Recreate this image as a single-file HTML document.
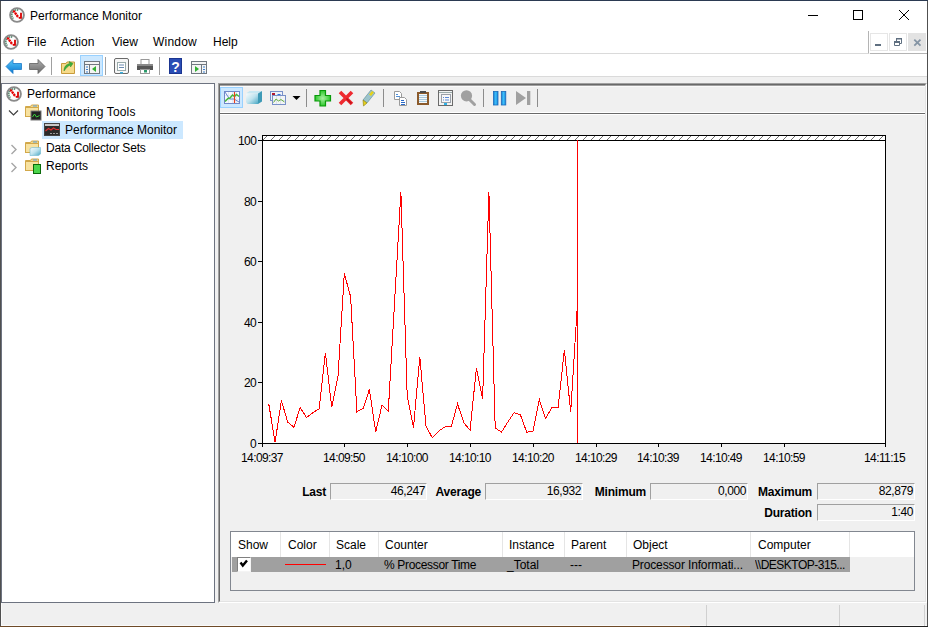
<!DOCTYPE html>
<html><head><meta charset="utf-8">
<style>
*{margin:0;padding:0;box-sizing:border-box}
html,body{width:928px;height:627px;overflow:hidden;background:#f0f0f0;font-family:"Liberation Sans",sans-serif;font-size:12px;color:#000}
.a{position:absolute}
.t{position:absolute;white-space:nowrap;line-height:14px}
.ax{position:absolute;white-space:nowrap;line-height:14px;letter-spacing:-0.6px;color:#000}
.box{position:absolute;height:17px;border-top:1px solid #a0a0a0;border-left:1px solid #a0a0a0;border-right:1px solid #fff;border-bottom:1px solid #fff;background:#f0f0f0;text-align:right;padding-right:1px;line-height:15px;letter-spacing:-0.4px}
.lb{text-align:right;font-weight:bold;letter-spacing:-0.2px}
.rw{letter-spacing:-0.2px}
.sep{position:absolute;width:1px;background:#e5e5e5}
</style></head><body>
<!-- window frame -->
<div class="a" style="left:0;top:0;width:928px;height:1px;background:#2b3a52"></div>
<div class="a" style="left:0;top:1px;width:1px;height:626px;background:#505050"></div>
<div class="a" style="left:927px;top:1px;width:1px;height:626px;background:#505050"></div>
<div class="a" style="left:0;top:626px;width:690px;height:1px;background:#6e4a28"></div>
<div class="a" style="left:690px;top:626px;width:238px;height:1px;background:#202020"></div>
<div class="a" style="left:1px;top:625px;width:926px;height:1px;background:#fafafa"></div>
<div class="a" style="left:1px;top:603px;width:1px;height:22px;background:#fafafa"></div>
<!-- title bar -->
<div class="a" style="left:1px;top:1px;width:926px;height:52px;background:#fff"></div>
<div class="t" style="left:30px;top:9px">Performance Monitor</div>
<!-- menu -->
<div class="t" style="left:27px;top:35px">File</div>
<div class="t" style="left:61px;top:35px">Action</div>
<div class="t" style="left:112px;top:35px">View</div>
<div class="t" style="left:153px;top:35px;letter-spacing:0.2px">Window</div>
<div class="t" style="left:213px;top:35px">Help</div>
<div class="a" style="left:1px;top:53px;width:867px;height:1px;background:#dadada"></div>
<!-- toolbar -->
<div class="a" style="left:1px;top:54px;width:926px;height:22px;background:#fff"></div>
<div class="a" style="left:1px;top:76px;width:926px;height:1px;background:#dadada"></div>
<!-- left pane -->
<div class="a" style="left:1px;top:83px;width:214px;height:520px;background:#fff;border:1px solid #6d7380"></div>
<div class="t" style="left:27px;top:87px">Performance</div>
<div class="t" style="left:46px;top:105px;letter-spacing:0.15px">Monitoring Tools</div>
<div class="a" style="left:42px;top:121px;width:141px;height:18px;background:#cce8ff"></div>
<div class="t" style="left:65px;top:123px">Performance Monitor</div>
<div class="t" style="left:46px;top:141px;letter-spacing:-0.2px">Data Collector Sets</div>
<div class="t" style="left:46px;top:159px">Reports</div>
<!-- right pane -->
<div class="a" style="left:218px;top:83px;width:709px;height:520px;border-left:1px solid #a0a0a0;border-top:1px solid #a0a0a0;border-right:1px solid #fff;border-bottom:1px solid #fff;background:#f0f0f0"></div>
<div class="a" style="left:219px;top:84px;width:707px;height:518px;border-left:1px solid #696969;border-top:1px solid #696969;border-right:1px solid #e3e3e3;border-bottom:1px solid #e3e3e3;background:#f0f0f0"></div>
<div class="a" style="left:220px;top:85px;width:705px;height:1px;background:#a0a0a0"></div>
<div class="a" style="left:220px;top:86px;width:705px;height:1px;background:#fafafa"></div>
<div class="a" style="left:220px;top:87px;width:23px;height:21px;background:#cce8ff;border:1px solid #99d1ff"></div>
<div class="a" style="left:220px;top:112px;width:705px;height:3px;border-top:1px solid #fff;border-bottom:1px solid #fff;background:#696969"></div>
<!-- axis labels -->
<div class="ax" style="left:238px;top:134px">100</div>
<div class="ax" style="left:244px;top:195px">80</div>
<div class="ax" style="left:244px;top:255px">60</div>
<div class="ax" style="left:244px;top:316px">40</div>
<div class="ax" style="left:244px;top:376px">20</div>
<div class="ax" style="left:250px;top:437px">0</div>
<div class="ax" style="left:241px;top:451px">14:09:37</div>
<div class="ax" style="left:323px;top:451px">14:09:50</div>
<div class="ax" style="left:386px;top:451px">14:10:00</div>
<div class="ax" style="left:449px;top:451px">14:10:10</div>
<div class="ax" style="left:512px;top:451px">14:10:20</div>
<div class="ax" style="left:575px;top:451px">14:10:29</div>
<div class="ax" style="left:637px;top:451px">14:10:39</div>
<div class="ax" style="left:700px;top:451px">14:10:49</div>
<div class="ax" style="left:763px;top:451px">14:10:59</div>
<div class="ax" style="left:864px;top:451px">14:11:15</div>
<svg class="a" style="left:0;top:0" width="928" height="627" viewBox="0 0 928 627">
<rect x="262.5" y="135.5" width="623" height="308" fill="#fff" stroke="#000" stroke-width="1"/>
<path d="M263 139h1v1h-1zM264 138h1v1h-1zM265 137h1v1h-1zM266 136h1v1h-1zM271 139h1v1h-1zM272 138h1v1h-1zM273 137h1v1h-1zM274 136h1v1h-1zM279 139h1v1h-1zM280 138h1v1h-1zM281 137h1v1h-1zM282 136h1v1h-1zM287 139h1v1h-1zM288 138h1v1h-1zM289 137h1v1h-1zM290 136h1v1h-1zM295 139h1v1h-1zM296 138h1v1h-1zM297 137h1v1h-1zM298 136h1v1h-1zM303 139h1v1h-1zM304 138h1v1h-1zM305 137h1v1h-1zM306 136h1v1h-1zM311 139h1v1h-1zM312 138h1v1h-1zM313 137h1v1h-1zM314 136h1v1h-1zM319 139h1v1h-1zM320 138h1v1h-1zM321 137h1v1h-1zM322 136h1v1h-1zM327 139h1v1h-1zM328 138h1v1h-1zM329 137h1v1h-1zM330 136h1v1h-1zM335 139h1v1h-1zM336 138h1v1h-1zM337 137h1v1h-1zM338 136h1v1h-1zM343 139h1v1h-1zM344 138h1v1h-1zM345 137h1v1h-1zM346 136h1v1h-1zM351 139h1v1h-1zM352 138h1v1h-1zM353 137h1v1h-1zM354 136h1v1h-1zM359 139h1v1h-1zM360 138h1v1h-1zM361 137h1v1h-1zM362 136h1v1h-1zM367 139h1v1h-1zM368 138h1v1h-1zM369 137h1v1h-1zM370 136h1v1h-1zM375 139h1v1h-1zM376 138h1v1h-1zM377 137h1v1h-1zM378 136h1v1h-1zM383 139h1v1h-1zM384 138h1v1h-1zM385 137h1v1h-1zM386 136h1v1h-1zM391 139h1v1h-1zM392 138h1v1h-1zM393 137h1v1h-1zM394 136h1v1h-1zM399 139h1v1h-1zM400 138h1v1h-1zM401 137h1v1h-1zM402 136h1v1h-1zM407 139h1v1h-1zM408 138h1v1h-1zM409 137h1v1h-1zM410 136h1v1h-1zM415 139h1v1h-1zM416 138h1v1h-1zM417 137h1v1h-1zM418 136h1v1h-1zM423 139h1v1h-1zM424 138h1v1h-1zM425 137h1v1h-1zM426 136h1v1h-1zM431 139h1v1h-1zM432 138h1v1h-1zM433 137h1v1h-1zM434 136h1v1h-1zM439 139h1v1h-1zM440 138h1v1h-1zM441 137h1v1h-1zM442 136h1v1h-1zM447 139h1v1h-1zM448 138h1v1h-1zM449 137h1v1h-1zM450 136h1v1h-1zM455 139h1v1h-1zM456 138h1v1h-1zM457 137h1v1h-1zM458 136h1v1h-1zM463 139h1v1h-1zM464 138h1v1h-1zM465 137h1v1h-1zM466 136h1v1h-1zM471 139h1v1h-1zM472 138h1v1h-1zM473 137h1v1h-1zM474 136h1v1h-1zM479 139h1v1h-1zM480 138h1v1h-1zM481 137h1v1h-1zM482 136h1v1h-1zM487 139h1v1h-1zM488 138h1v1h-1zM489 137h1v1h-1zM490 136h1v1h-1zM495 139h1v1h-1zM496 138h1v1h-1zM497 137h1v1h-1zM498 136h1v1h-1zM503 139h1v1h-1zM504 138h1v1h-1zM505 137h1v1h-1zM506 136h1v1h-1zM511 139h1v1h-1zM512 138h1v1h-1zM513 137h1v1h-1zM514 136h1v1h-1zM519 139h1v1h-1zM520 138h1v1h-1zM521 137h1v1h-1zM522 136h1v1h-1zM527 139h1v1h-1zM528 138h1v1h-1zM529 137h1v1h-1zM530 136h1v1h-1zM535 139h1v1h-1zM536 138h1v1h-1zM537 137h1v1h-1zM538 136h1v1h-1zM543 139h1v1h-1zM544 138h1v1h-1zM545 137h1v1h-1zM546 136h1v1h-1zM551 139h1v1h-1zM552 138h1v1h-1zM553 137h1v1h-1zM554 136h1v1h-1zM559 139h1v1h-1zM560 138h1v1h-1zM561 137h1v1h-1zM562 136h1v1h-1zM567 139h1v1h-1zM568 138h1v1h-1zM569 137h1v1h-1zM570 136h1v1h-1zM575 139h1v1h-1zM576 138h1v1h-1zM577 137h1v1h-1zM578 136h1v1h-1zM583 139h1v1h-1zM584 138h1v1h-1zM585 137h1v1h-1zM586 136h1v1h-1zM591 139h1v1h-1zM592 138h1v1h-1zM593 137h1v1h-1zM594 136h1v1h-1zM599 139h1v1h-1zM600 138h1v1h-1zM601 137h1v1h-1zM602 136h1v1h-1zM607 139h1v1h-1zM608 138h1v1h-1zM609 137h1v1h-1zM610 136h1v1h-1zM615 139h1v1h-1zM616 138h1v1h-1zM617 137h1v1h-1zM618 136h1v1h-1zM623 139h1v1h-1zM624 138h1v1h-1zM625 137h1v1h-1zM626 136h1v1h-1zM631 139h1v1h-1zM632 138h1v1h-1zM633 137h1v1h-1zM634 136h1v1h-1zM639 139h1v1h-1zM640 138h1v1h-1zM641 137h1v1h-1zM642 136h1v1h-1zM647 139h1v1h-1zM648 138h1v1h-1zM649 137h1v1h-1zM650 136h1v1h-1zM655 139h1v1h-1zM656 138h1v1h-1zM657 137h1v1h-1zM658 136h1v1h-1zM663 139h1v1h-1zM664 138h1v1h-1zM665 137h1v1h-1zM666 136h1v1h-1zM671 139h1v1h-1zM672 138h1v1h-1zM673 137h1v1h-1zM674 136h1v1h-1zM679 139h1v1h-1zM680 138h1v1h-1zM681 137h1v1h-1zM682 136h1v1h-1zM687 139h1v1h-1zM688 138h1v1h-1zM689 137h1v1h-1zM690 136h1v1h-1zM695 139h1v1h-1zM696 138h1v1h-1zM697 137h1v1h-1zM698 136h1v1h-1zM703 139h1v1h-1zM704 138h1v1h-1zM705 137h1v1h-1zM706 136h1v1h-1zM711 139h1v1h-1zM712 138h1v1h-1zM713 137h1v1h-1zM714 136h1v1h-1zM719 139h1v1h-1zM720 138h1v1h-1zM721 137h1v1h-1zM722 136h1v1h-1zM727 139h1v1h-1zM728 138h1v1h-1zM729 137h1v1h-1zM730 136h1v1h-1zM735 139h1v1h-1zM736 138h1v1h-1zM737 137h1v1h-1zM738 136h1v1h-1zM743 139h1v1h-1zM744 138h1v1h-1zM745 137h1v1h-1zM746 136h1v1h-1zM751 139h1v1h-1zM752 138h1v1h-1zM753 137h1v1h-1zM754 136h1v1h-1zM759 139h1v1h-1zM760 138h1v1h-1zM761 137h1v1h-1zM762 136h1v1h-1zM767 139h1v1h-1zM768 138h1v1h-1zM769 137h1v1h-1zM770 136h1v1h-1zM775 139h1v1h-1zM776 138h1v1h-1zM777 137h1v1h-1zM778 136h1v1h-1zM783 139h1v1h-1zM784 138h1v1h-1zM785 137h1v1h-1zM786 136h1v1h-1zM791 139h1v1h-1zM792 138h1v1h-1zM793 137h1v1h-1zM794 136h1v1h-1zM799 139h1v1h-1zM800 138h1v1h-1zM801 137h1v1h-1zM802 136h1v1h-1zM807 139h1v1h-1zM808 138h1v1h-1zM809 137h1v1h-1zM810 136h1v1h-1zM815 139h1v1h-1zM816 138h1v1h-1zM817 137h1v1h-1zM818 136h1v1h-1zM823 139h1v1h-1zM824 138h1v1h-1zM825 137h1v1h-1zM826 136h1v1h-1zM831 139h1v1h-1zM832 138h1v1h-1zM833 137h1v1h-1zM834 136h1v1h-1zM839 139h1v1h-1zM840 138h1v1h-1zM841 137h1v1h-1zM842 136h1v1h-1zM847 139h1v1h-1zM848 138h1v1h-1zM849 137h1v1h-1zM850 136h1v1h-1zM855 139h1v1h-1zM856 138h1v1h-1zM857 137h1v1h-1zM858 136h1v1h-1zM863 139h1v1h-1zM864 138h1v1h-1zM865 137h1v1h-1zM866 136h1v1h-1zM871 139h1v1h-1zM872 138h1v1h-1zM873 137h1v1h-1zM874 136h1v1h-1zM879 139h1v1h-1zM880 138h1v1h-1zM881 137h1v1h-1zM882 136h1v1h-1z" fill="#707070" shape-rendering="crispEdges"/>
<line x1="262" y1="140.5" x2="886" y2="140.5" stroke="#000"/>
<path d="M258 140.5H262M258 201.5H262M258 261.5H262M258 322.5H262M258 382.5H262M258 443.5H262" stroke="#000"/>
<path d="M262.5 443V447M344.5 443V447M407.5 443V447M470.5 443V447M533.5 443V447M596.5 443V447M658.5 443V447M721.5 443V447M784.5 443V447M885.5 443V447" stroke="#000"/>
<polyline points="268.8,404.2 275.1,442.1 281.4,400.6 287.7,422.1 293.9,427.2 300.2,407.5 306.5,417.5 312.8,412.7 319.1,408.8 325.4,352.7 331.7,407.2 338.0,376.3 344.3,273.6 350.6,296.7 356.9,411.8 363.1,408.5 369.4,389.4 375.7,432.1 382.0,405.1 388.3,410.9 394.6,301.5 400.9,192.1 407.2,395.7 413.5,427.5 419.8,356.9 426.0,426.3 432.3,437.8 438.6,431.2 444.9,426.9 451.2,426.9 457.5,403.9 463.8,422.7 470.1,430.3 476.4,367.9 482.6,399.1 488.9,191.8 495.2,427.9 501.5,432.1 507.8,422.1 514.1,412.7 520.4,414.8 526.7,432.1 533.0,431.5 539.3,399.4 545.5,418.5 551.8,407.9 558.1,407.9 564.4,349.7 570.7,412.1 577.0,310.6" fill="none" stroke="#f00" stroke-width="1" shape-rendering="crispEdges"/>
<line x1="577.5" y1="140" x2="577.5" y2="443" stroke="#f00"/>
</svg>
<svg class="a" style="left:0;top:0" width="928" height="627" viewBox="0 0 928 627">
<defs>
<g id="gauge">
<circle cx="8" cy="8" r="6.9" fill="#fcfcfc" stroke="#8a8a8a" stroke-width="1.9"/>
<path d="M4.4 11.6A5 5 0 0 1 9.5 3.2" fill="none" stroke="#5c8c74" stroke-width="1.7" stroke-dasharray="1.3 0.7"/>
<path d="M4.4 3.6L9.4 10.4" stroke="#e60000" stroke-width="2.3" stroke-dasharray="2.2 0.5"/>
<path d="M12 5.8V10.8H9.8" fill="none" stroke="#d80000" stroke-width="1.8"/>
</g>
<g id="folder">
<path d="M0.5 2.5H5.5L6.5 1H13.5V12.5H0.5Z" fill="#f5d889" stroke="#d2a84a" stroke-width="1"/>
<rect x="0.5" y="3.5" width="13" height="9" fill="#f8e2a0" stroke="#d2a84a" stroke-width="1"/>
<rect x="8" y="1.5" width="4" height="1" fill="#5aa0e0"/>
</g>
<linearGradient id="blueg" x1="0" y1="0" x2="0" y2="1"><stop offset="0" stop-color="#5ac8fa"/><stop offset="1" stop-color="#0a78d0"/></linearGradient>
<linearGradient id="grayg" x1="0" y1="0" x2="0" y2="1"><stop offset="0" stop-color="#b0b0b0"/><stop offset="1" stop-color="#6a6a6a"/></linearGradient>
<linearGradient id="cubeg" x1="0" y1="0" x2="1" y2="1"><stop offset="0" stop-color="#f6fbfd"/><stop offset="0.5" stop-color="#bfe3ee"/><stop offset="1" stop-color="#4aa8c4"/></linearGradient>
<linearGradient id="pauseg" x1="0" y1="0" x2="1" y2="0"><stop offset="0" stop-color="#1a7fd8"/><stop offset="0.5" stop-color="#3cc0f8"/><stop offset="1" stop-color="#1a7fd8"/></linearGradient>
<radialGradient id="plusg" cx="0.5" cy="0.5" r="0.5"><stop offset="0" stop-color="#a8f0a0"/><stop offset="1" stop-color="#2cc82c"/></radialGradient>
</defs>
<!-- title icon + menu icon -->
<use href="#gauge" x="9" y="7"/>
<use href="#gauge" x="3" y="34"/>
<!-- window controls -->
<path d="M808 15.5H818" stroke="#000" stroke-width="1"/>
<rect x="853.5" y="10.5" width="9" height="9" fill="none" stroke="#000" stroke-width="1"/>
<path d="M899 10L909 20M909 10L899 20" stroke="#000" stroke-width="1"/>
<!-- mdi buttons -->
<path d="M868.5 31V53.5" stroke="#b4b4b4"/>
<path d="M870 53.5H927" stroke="#b4b4b4"/>
<rect x="870.5" y="33.5" width="17" height="17" fill="#fff" stroke="#e6e6e6"/>
<rect x="889.5" y="33.5" width="17" height="17" fill="#fff" stroke="#e6e6e6"/>
<rect x="908" y="33" width="18" height="18" fill="#e3e3e3"/>
<rect x="875" y="44" width="6" height="2" fill="#5f6f80"/>
<path d="M896.5 41V38.5H901.5V43.5H899.5" fill="none" stroke="#5f6f80" stroke-width="1"/><rect x="894" y="41" width="6" height="2" fill="#5f6f80"/><path d="M894.5 42V45.5H899.5V42" fill="none" stroke="#5f6f80" stroke-width="1"/><rect x="896" y="38" width="6" height="1.5" fill="#5f6f80"/>
<path d="M914.3 39.6L920.5 45.6M920.5 39.6L914.3 45.6" stroke="#8494a4" stroke-width="1.8"/>
<!-- main toolbar -->
<path d="M6 66.5L13 59.5V63.5H21.5V69.5H13V73.5Z" fill="url(#blueg)" stroke="#1a78c8" stroke-width="0.8"/>
<path d="M45 66.5L38 59.5V63.5H29.5V69.5H38V73.5Z" fill="url(#grayg)" stroke="#606060" stroke-width="0.8"/>
<path d="M51.5 57V75M105.5 57V75M159.5 57V75" stroke="#a0a0a0"/>
<path d="M61.5 63.5H66L67 62H74.5V73.5H61.5Z" fill="#f6da8a" stroke="#c89b3c"/>
<path d="M64 71C64 66 67 64 70 63.5L69 61.5L73 63.5L70.5 67L70.2 65C68 66 66 68 64 71Z" fill="#3cb03c" stroke="#2a8a2a" stroke-width="0.5"/>
<rect x="80.5" y="55.5" width="22" height="20" fill="#cce8ff" stroke="#99d1ff"/>
<rect x="84.5" y="61.5" width="15" height="12" fill="#f4f4f4" stroke="#707880"/>
<path d="M85 64.5H99" stroke="#707880"/>
<path d="M89.5 64.5V73.5" stroke="#707880"/>
<path d="M86 67H88M86 69.5H88M86 72H88" stroke="#3a80d0"/>
<path d="M96 66L92 69L96 72Z" fill="#30b030"/>
<rect x="114.5" y="58.5" width="14" height="15" rx="1.5" fill="#f6f6f6" stroke="#6a6a6a"/>
<rect x="117.5" y="62.5" width="8" height="8" fill="#fff" stroke="#9aa"/>
<path d="M119 65H124M119 67.5H124" stroke="#6a8ab0"/>
<rect x="120" y="72" width="3" height="1.5" fill="#3ab0e0"/>
<rect x="141" y="59.5" width="8" height="5" fill="#fff" stroke="#999"/>
<rect x="137" y="64" width="16" height="6" fill="#555"/>
<rect x="137" y="64" width="16" height="2" fill="#888"/>
<rect x="140.5" y="69.5" width="9" height="4" fill="#fff" stroke="#999"/>
<rect x="144" y="70" width="3" height="2.5" fill="#2a9a6a"/>
<rect x="169" y="58" width="13" height="16" fill="#2a4db5"/>
<rect x="169.5" y="58.5" width="12" height="15" fill="none" stroke="#1b3590"/>
<text x="175.5" y="71.5" font-family="Liberation Sans" font-size="14" font-weight="bold" fill="#fff" text-anchor="middle">?</text>
<rect x="191.5" y="61.5" width="15" height="12" fill="#f4f4f4" stroke="#707880"/>
<path d="M192 64.5H206" stroke="#707880"/>
<path d="M201.5 64.5V73.5" stroke="#707880"/>
<path d="M203 67H205M203 69.5H205M203 72H205" stroke="#3a80d0"/>
<path d="M195 66V72L199 69Z" fill="#30b030"/>
<!-- tree icons -->
<use href="#gauge" x="6" y="86"/>
<path d="M9 110.5L13.5 115L18 110.5" fill="none" stroke="#404040" stroke-width="1.2"/>
<use href="#folder" x="25" y="104"/>
<rect x="31" y="111" width="10" height="9" fill="#222" stroke="#777" stroke-width="1"/>
<path d="M32.5 117L34.5 114L36.5 117L39.5 115.5" fill="none" stroke="#3ad23a" stroke-width="1"/>
<rect x="44.5" y="123.5" width="15" height="12" fill="#2b2b2b" stroke="#444"/>
<rect x="45" y="124" width="14" height="2" fill="#c8c8c8"/>
<path d="M45.5 131L48.5 128.5L51 130L53.5 128L56 129.5H59" fill="none" stroke="#e03030" stroke-width="1.2"/>
<path d="M50 133.5H52M53 133.5H55M56 133.5H58" stroke="#999"/>
<path d="M11.5 145L16 149.5L11.5 154" fill="none" stroke="#a6a6a6" stroke-width="1.4"/>
<use href="#folder" x="25" y="140"/>
<path d="M30 148.5L32 147.5H40.5V154L38.5 155.5H30Z" fill="url(#cubeg)" stroke="#70b8d0" stroke-width="0.6"/>
<path d="M11.5 163L16 167.5L11.5 172" fill="none" stroke="#a6a6a6" stroke-width="1.4"/>
<use href="#folder" x="25" y="158"/>
<rect x="33.5" y="164.5" width="7" height="9" fill="#4cd64c" stroke="#0a6a0a"/>
<!-- right toolbar -->
<rect x="224.5" y="91.5" width="15" height="12" fill="#f6f9ff" stroke="#7088c8"/>
<path d="M228.5 92V103M232.5 92V103M236.5 92V103M225 95.5H239M225 99.5H239" stroke="#e2e9f6"/>
<path d="M225 92L229.5 99H234L239 102" fill="none" stroke="#6a86d0" stroke-width="1"/>
<path d="M225 101.5L228 98.5L230 98L232.5 95L234.5 96.5L236.5 94.5L239 96.5" fill="none" stroke="#46b83c" stroke-width="1.5"/>
<path d="M234.5 92V103" stroke="#e8401c" stroke-width="1.2"/>
<path d="M246 93.5L249.5 91H262L258 93.5Z" fill="#c8e8f2"/>
<path d="M246 93.5H258V104H247.5L246 102Z" fill="url(#cubeg)"/>
<path d="M258 93.5L262 91V101.5L258 104Z" fill="#3e9ab6"/>
<rect x="270.5" y="91.5" width="12" height="9" fill="#eef1f8" stroke="#7890c8"/>
<rect x="272" y="93" width="3" height="2" fill="#b01830"/>
<rect x="277.5" y="94" width="3" height="1.5" fill="#3070e0"/>
<rect x="272.5" y="95.5" width="13" height="9" fill="#f2f4f6" stroke="#7890c8"/>
<path d="M276.5 96V104M280.5 96V104M273 100.5H285" stroke="#dde3ea"/>
<path d="M273.5 102.5L276 99L278.5 101L281 99.5L284.5 102" fill="none" stroke="#66b040" stroke-width="1"/>
<path d="M292.5 96H300.5L296.5 100Z" fill="#000"/>
<path d="M306.5 89V107M383.5 89V107M483.5 89V107M537.5 89V107" stroke="#8c8c8c"/>
<path d="M320 90.5H325.5V95.5H330.5V101H325.5V106H320V101H315V95.5H320Z" fill="url(#plusg)" stroke="#0a9a0a" stroke-width="1.2"/>
<path d="M340 92L346 98L352 92M340 104L346 98L352 104" fill="none" stroke="#ee2a30" stroke-width="3.6"/><path d="M346.5 98.5L351.5 103.5" stroke="#c01018" stroke-width="1.6"/>
<path d="M371 90L375 93L367 103L363 100Z" fill="#9cc4cc" stroke="#5a8a94" stroke-width="0.6"/>
<path d="M372 91L374 92.5L371 96L369 94.5Z" fill="#e6d21a"/>
<path d="M363 100L367 103L363.5 106Z" fill="#e6d21a" stroke="#8a7a10" stroke-width="0.6"/>
<path d="M394.5 91.5H399.5L401.5 93.5V99.5H394.5Z" fill="#fff" stroke="#9a9a9a"/>
<path d="M396 94.5H398M396 96.5H400" stroke="#5090d8"/>
<path d="M399.5 97.5H404.5L406.5 99.5V105.5H399.5Z" fill="#fff" stroke="#9a9a9a"/>
<path d="M401 100.5H404M401 102.5H405M401 104.5H405" stroke="#2a6ac8"/>
<rect x="417" y="92" width="12" height="13" fill="#8b5a2b"/>
<rect x="419" y="94" width="8" height="9" fill="#f4f8fa"/>
<path d="M419 95.5H427M419 97.5H427M419 99.5H427M419 101.5H427" stroke="#a8c8dc"/>
<rect x="420" y="91" width="6" height="2" fill="#4a4a4a"/>
<rect x="438.5" y="90.5" width="14" height="15" fill="#f2f2f2" stroke="#6a6a6a"/>
<path d="M439 92.5H452" stroke="#9aa"/>
<rect x="441.5" y="94.5" width="9" height="8" fill="#f8f8f8" stroke="#9aa0a8"/>
<path d="M443 97.5H444M445 97.5H449M443 100H444M445 100H449" stroke="#5a8ad8"/>
<rect x="444" y="103" width="3" height="2" fill="#2ab0e8"/>
<circle cx="466.5" cy="95.8" r="5.6" fill="#a0a0a0"/>
<path d="M469.5 99.5L474.5 104.5" stroke="#a0a0a0" stroke-width="3" stroke-linecap="round"/>
<rect x="493.5" y="91.5" width="4.5" height="13.5" fill="url(#pauseg)" stroke="#1a6ab8" stroke-width="0.8"/>
<rect x="501.3" y="91.5" width="4.5" height="13.5" fill="url(#pauseg)" stroke="#1a6ab8" stroke-width="0.8"/>
<path d="M516 91V105L526 98Z" fill="#a0a0a0"/>
<rect x="527" y="91" width="3.3" height="14" fill="#a0a0a0"/>
</svg>

<!-- stats -->
<div class="t lb" style="left:276px;top:485px;width:50px">Last</div>
<div class="box" style="left:330px;top:483px;width:97px">46,247</div>
<div class="t lb" style="left:431px;top:485px;width:50px">Average</div>
<div class="box" style="left:485px;top:483px;width:98px">16,932</div>
<div class="t lb" style="left:586px;top:485px;width:60px">Minimum</div>
<div class="box" style="left:650px;top:483px;width:98px">0,000</div>
<div class="t lb" style="left:752px;top:485px;width:60px">Maximum</div>
<div class="box" style="left:817px;top:483px;width:98px">82,879</div>
<div class="t lb" style="left:752px;top:506px;width:60px">Duration</div>
<div class="box" style="left:817px;top:504px;width:98px">1:40</div>
<!-- legend -->
<div class="a" style="left:230px;top:531px;width:685px;height:60px;border-top:1px solid #828790;border-left:1px solid #828790;border-right:1px solid #828790;border-bottom:1px solid #828790;background:#f0f0f0"></div>
<div class="a" style="left:231px;top:532px;width:683px;height:25px;background:#fff"></div>
<div class="sep" style="left:280px;top:532px;height:25px"></div>
<div class="sep" style="left:329px;top:532px;height:25px"></div>
<div class="sep" style="left:378px;top:532px;height:25px"></div>
<div class="sep" style="left:502px;top:532px;height:25px"></div>
<div class="sep" style="left:564px;top:532px;height:25px"></div>
<div class="sep" style="left:626px;top:532px;height:25px"></div>
<div class="sep" style="left:750px;top:532px;height:25px"></div>
<div class="sep" style="left:849px;top:532px;height:25px"></div>
<div class="t" style="left:238px;top:538px">Show</div>
<div class="t" style="left:288px;top:538px">Color</div>
<div class="t" style="left:336px;top:538px">Scale</div>
<div class="t" style="left:385px;top:538px">Counter</div>
<div class="t" style="left:509px;top:538px">Instance</div>
<div class="t" style="left:571px;top:538px">Parent</div>
<div class="t" style="left:633px;top:538px">Object</div>
<div class="t" style="left:758px;top:538px">Computer</div>
<div class="a" style="left:232px;top:557px;width:618px;height:15px;background:#a0a0a0"></div>
<div class="a" style="left:237px;top:557px;width:14px;height:15px;background:#fff;border-left:1px solid #808080;border-top:1px solid #808080;border-right:1px solid #f4f4f4;border-bottom:1px solid #f4f4f4"></div>
<svg class="a" style="left:237px;top:557px" width="14" height="15"><path d="M3.5 5.5L5.8 8.5L10 3.5" fill="none" stroke="#000" stroke-width="2.4"/></svg>
<div class="a" style="left:285px;top:564px;width:41px;height:1px;background:#f00"></div>
<div class="t" style="left:335px;top:558px">1,0</div>
<div class="t" style="left:384px;top:558px;letter-spacing:-0.33px">% Processor Time</div>
<div class="t" style="left:507px;top:558px">_Total</div>
<div class="t" style="left:570px;top:558px">---</div>
<div class="t" style="left:632px;top:558px;letter-spacing:-0.14px">Processor Informati...</div>
<div class="t" style="left:755px;top:558px;width:94px;overflow:hidden;letter-spacing:-0.5px">\\DESKTOP-315...</div>
<!-- status bar -->

<div class="a" style="left:706px;top:605px;width:1px;height:21px;background:#d0d0d0"></div>
<div class="a" style="left:839px;top:605px;width:1px;height:21px;background:#d0d0d0"></div>
<div class="a" style="left:924px;top:605px;width:1px;height:21px;background:#d0d0d0"></div>
</body></html>
